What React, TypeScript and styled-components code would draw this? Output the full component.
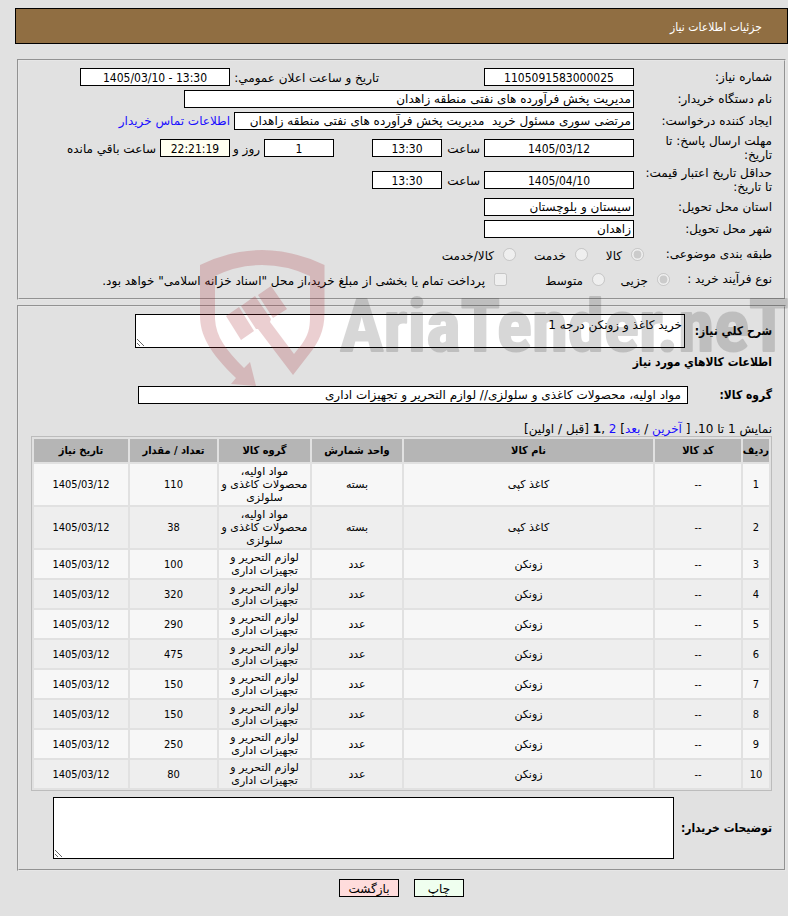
import React from "react";
import styled, { createGlobalStyle, css } from "styled-components";

const textFont = '"DejaVu Sans", Tahoma, sans-serif';
const compactFont = '"DejaVu Sans Condensed", "DejaVu Sans", Tahoma, sans-serif';

const GlobalStyle = createGlobalStyle`
  *, *::before, *::after { box-sizing: border-box; }
  body {
    margin: 0;
    background: #e1e1e1;
    color: #000;
    font: 12px/14px ${textFont};
  }
  a { color: #1a0dff; text-decoration: none; }
`;

const Page = styled.main`
  position: relative;
  padding: 8px 0 18px 15px;
  overflow: hidden;
`;

const TitleBar = styled.h1`
  display: flex;
  align-items: center;
  height: 36px;
  margin: 0 0 15px;
  padding: 2px 25px 0;
  border: 1px solid #000;
  background: #906e42;
  color: #fff;
  font: 12px/14px ${compactFont};
`;

const Panel = styled.fieldset`
  min-width: 0;
  margin: 0 2px 5px;
  padding: 7px 12px 10px;
  border: 2px groove #e6e6e6;
`;

const FormGrid = styled.div`
  display: flex;
  flex-direction: column;
  gap: 4px;
`;

const Row = styled.div<{ $height?: number }>`
  display: flex;
  align-items: center;
  gap: 4px;
  min-height: ${(p) => p.$height ?? 18}px;
`;

const RowLabel = styled.label<{ $width?: number }>`
  flex: none;
  width: ${(p) => p.$width ?? 134}px;
`;

const InlineLabel = styled.label<{ $width: number; $before?: number }>`
  flex: none;
  width: ${(p) => p.$width}px;
  margin-inline-start: ${(p) => p.$before ?? 0}px;
  padding-top: 1px;
  white-space: nowrap;
`;

const fieldLook = css`
  border: 1px solid #000;
  border-radius: 0;
  outline: 0;
  background: #fff;
  color: #000;
`;

const Field = styled.input<{ $width: number; $numeric?: boolean; $before?: number; $warm?: boolean; $inset?: number }>`
  ${fieldLook}
  flex: none;
  width: ${(p) => p.$width}px;
  height: 18px;
  margin: 0;
  margin-inline-start: ${(p) => p.$before ?? 0}px;
  padding: ${(p) => (p.$numeric ? 1 : 0)}px ${(p) => p.$inset ?? 2}px 0;
  font: 12px/14px ${(p) => (p.$numeric ? compactFont : textFont)};
  text-align: ${(p) => (p.$numeric ? "center" : "start")};
  ${(p) => p.$warm && "background: #fffff0;"}
`;

const ContactLink = styled.a`
  white-space: nowrap;
`;

const Choice = styled.input`
  flex: none;
  width: 13px;
  height: 13px;
  margin: 0;
`;

const ChoiceLabel = styled.label<{ $width?: number; $after?: number }>`
  flex: none;
  width: ${(p) => (p.$width ? `${p.$width}px` : "auto")};
  margin-inline-start: 5px;
  margin-inline-end: ${(p) => p.$after ?? 0}px;
  padding-top: 3px;
  white-space: nowrap;
`;

const BoldLabel = styled.label<{ $width: number }>`
  flex: none;
  width: ${(p) => p.$width}px;
  font: bold 12px/14px ${compactFont};
  white-space: nowrap;
`;

const Memo = styled.textarea<{ $width: number; $height: number }>`
  ${fieldLook}
  display: block;
  flex: none;
  width: ${(p) => p.$width}px;
  height: ${(p) => p.$height}px;
  margin: 0;
  padding: 3px 2px;
  font: 12px/14px ${textFont};
`;

const SectionHeading = styled.h2`
  margin: 6px 0 16px;
  font: bold 12px/16px ${compactFont};
`;

const Pager = styled.nav`
  margin-top: 18px;
`;

const Goods = styled.table`
  width: 100%;
  margin-bottom: 6px;
  table-layout: fixed;
  border: 1px solid #bcbcbc;
  border-collapse: separate;
  border-spacing: 2px;
  font-size: 11px;
  line-height: 13px;
  text-align: center;
`;

const Column = styled.col<{ $width?: number }>`
  width: ${(p) => (p.$width ? `${p.$width}px` : "auto")};
`;

const HeadCell = styled.th`
  height: 23px;
  padding: 0;
  background: #b5b5b5;
  font: bold 11px/13px ${compactFont};
  white-space: nowrap;
`;

const BodyRow = styled.tr`
  background: #f7f7f7;
  &:nth-child(even) { background: #eee; }
`;

const Cell = styled.td<{ $numeric?: boolean }>`
  padding: 1px;
  font-family: ${(p) => (p.$numeric ? compactFont : textFont)};
`;

const Actions = styled.div`
  display: flex;
  justify-content: center;
  gap: 15px;
  margin-top: 8px;
`;

const ActionButton = styled.button<{ $width: number; $tone: string }>`
  width: ${(p) => p.$width}px;
  height: 18px;
  padding: 1px 0 0;
  border: 1px solid #000;
  border-radius: 0;
  background: ${(p) => p.$tone};
  color: #000;
  font: 12px/14px ${textFont};
`;

const Watermark = styled.svg`
  position: absolute;
  top: 240px;
  left: 200px;
  width: 588px;
  height: 150px;
  pointer-events: none;
`;

const paper = ["مواد اولیه، محصولات کاغذی و سلولزی", "بسته", "کاغذ کپی"];
const office = ["لوازم التحریر و تجهیزات اداری", "عدد", "زونکن"];
const goods = [
  { kind: paper, count: 110 },
  { kind: paper, count: 38 },
  { kind: office, count: 100 },
  { kind: office, count: 320 },
  { kind: office, count: 290 },
  { kind: office, count: 475 },
  { kind: office, count: 150 },
  { kind: office, count: 150 },
  { kind: office, count: 250 },
  { kind: office, count: 80 },
];

const headings = ["ردیف", "کد کالا", "نام کالا", "واحد شمارش", "گروه کالا", "تعداد / مقدار", "تاریخ نیاز"];

function WatermarkLogo() {
  return (
    <Watermark viewBox="200 240 588 150" aria-hidden="true">
      <g fill="#a82932" opacity="0.22">
        <path d="M200 265Q231 250 262 250T324.500 265V313C324.500 331 318 343 310 353L293 375L258 329L256 329L241 306L255 296L271 319L270 322L294 354L302 344C308 335 310 329 310 317V276Q287 265 262 265T215 276V319C216 337 226 350 244 368L250 362L256 386L231 384L236 378C209 352 200 335 200 315Z" />
        <path d="M226 316L239 307L254 331L241 340ZM258 295L271 286L287 309L273 318Z" />
      </g>
      <g opacity="0.17">
        <text x="340" y="351" direction="ltr" fill="#181818" stroke="#181818" strokeWidth="2" strokeLinejoin="round" fontFamily="'Roboto Condensed', Roboto, sans-serif" fontWeight="700" fontSize="73">
          AriaTender.neT
        </text>
      </g>
    </Watermark>
  );
}

export default function App() {
  return (
    <Page dir="rtl" lang="fa">
      <GlobalStyle />
      <TitleBar>جزئیات اطلاعات نیاز</TitleBar>

      <Panel>
        <FormGrid>
          <Row>
            <RowLabel htmlFor="number">شماره نیاز:</RowLabel>
            <Field id="number" $width={150} $numeric readOnly value="1105091583000025" />
            <InlineLabel htmlFor="announced" $width={145} $before={101}>تاریخ و ساعت اعلان عمومي:</InlineLabel>
            <Field id="announced" $width={150} $numeric dir="ltr" readOnly value="1405/03/10 - 13:30" />
          </Row>
          <Row>
            <RowLabel htmlFor="buyer">نام دستگاه خریدار:</RowLabel>
            <Field id="buyer" $width={450} readOnly value="مدیریت پخش فرآورده های نفتی منطقه زاهدان" />
          </Row>
          <Row>
            <RowLabel htmlFor="creator">ایجاد کننده درخواست:</RowLabel>
            <Field id="creator" $width={400} readOnly value="مرتضی سوری مسئول خرید  مدیریت پخش فرآورده های نفتی منطقه زاهدان" />
            <ContactLink href="#contact">اطلاعات تماس خریدار</ContactLink>
          </Row>
          <Row $height={28}>
            <RowLabel htmlFor="replyDate">مهلت ارسال پاسخ: تا تاریخ:</RowLabel>
            <Field id="replyDate" $width={150} $numeric readOnly value="1405/03/12" />
            <InlineLabel htmlFor="replyTime" $width={34}>ساعت</InlineLabel>
            <Field id="replyTime" $width={70} $numeric readOnly value="13:30" />
            <Field id="days" $width={70} $numeric $before={34} readOnly value="1" />
            <InlineLabel htmlFor="days" $width={26}>روز و</InlineLabel>
            <Field id="remaining" $width={70} $numeric $warm readOnly value="22:21:19" />
            <InlineLabel htmlFor="remaining" $width={90}>ساعت باقي مانده</InlineLabel>
          </Row>
          <Row $height={28}>
            <RowLabel htmlFor="validDate">حداقل تاریخ اعتبار قیمت: تا تاریخ:</RowLabel>
            <Field id="validDate" $width={150} $numeric readOnly value="1405/04/10" />
            <InlineLabel htmlFor="validTime" $width={34}>ساعت</InlineLabel>
            <Field id="validTime" $width={70} $numeric readOnly value="13:30" />
          </Row>
          <Row>
            <RowLabel htmlFor="province">استان محل تحویل:</RowLabel>
            <Field id="province" $width={150} readOnly value="سیستان و بلوچستان" />
          </Row>
          <Row>
            <RowLabel htmlFor="city">شهر محل تحویل:</RowLabel>
            <Field id="city" $width={150} readOnly value="زاهدان" />
          </Row>
          <Row $height={24} role="radiogroup" aria-labelledby="subject">
            <RowLabel as="span" id="subject" $width={124}>طبقه بندی موضوعی:</RowLabel>
            <Choice type="radio" id="goods" name="subject" disabled defaultChecked />
            <ChoiceLabel htmlFor="goods" $width={16} $after={14}>کالا</ChoiceLabel>
            <Choice type="radio" id="service" name="subject" disabled />
            <ChoiceLabel htmlFor="service" $width={32} $after={14}>خدمت</ChoiceLabel>
            <Choice type="radio" id="both" name="subject" disabled />
            <ChoiceLabel htmlFor="both">کالا/خدمت</ChoiceLabel>
          </Row>
          <Row role="radiogroup" aria-labelledby="process">
            <RowLabel as="span" id="process" $width={98}>نوع فرآیند خرید :</RowLabel>
            <Choice type="radio" id="minor" name="process" disabled defaultChecked />
            <ChoiceLabel htmlFor="minor" $width={28} $after={11}>جزیی</ChoiceLabel>
            <Choice type="radio" id="medium" name="process" disabled />
            <ChoiceLabel htmlFor="medium" $width={36} $after={36}>متوسط</ChoiceLabel>
            <Choice type="checkbox" id="bonds" disabled />
            <ChoiceLabel htmlFor="bonds">پرداخت تمام یا بخشی از مبلغ خرید،از محل "اسناد خزانه اسلامی" خواهد بود.</ChoiceLabel>
          </Row>
        </FormGrid>
      </Panel>

      <Panel>
        <Row>
          <BoldLabel htmlFor="summary" $width={83}>شرح کلي نیاز:</BoldLabel>
          <Memo id="summary" $width={550} $height={34} readOnly value="خرید کاغذ و زونکن درجه 1" />
        </Row>
        <SectionHeading>اطلاعات کالاهاي مورد نیاز</SectionHeading>
        <Row>
          <BoldLabel htmlFor="group" $width={80}>گروه کالا:</BoldLabel>
          <Field id="group" $width={550} $inset={6} readOnly value="مواد اولیه، محصولات کاغذی و سلولزی// لوازم التحریر و تجهیزات اداری" />
        </Row>
        <Pager>
          نمایش 1 تا 10. [ <a href="#last">آخرین</a> / <a href="#next">بعد</a>] <a href="#2">2</a> ,<strong>1</strong> [قبل / اولین]
        </Pager>
        <Goods>
          <colgroup>
            <Column $width={26} />
            <Column $width={86} />
            <Column />
            <Column $width={90} />
            <Column $width={91} />
            <Column $width={87} />
            <Column $width={94} />
          </colgroup>
          <thead>
            <tr>
              {headings.map((h) => (
                <HeadCell key={h} scope="col">{h}</HeadCell>
              ))}
            </tr>
          </thead>
          <tbody>
            {goods.map(({ kind: [group, unit, name], count }, i) => (
              <BodyRow key={i}>
                <Cell $numeric>{i + 1}</Cell>
                <Cell $numeric>--</Cell>
                <Cell>{name}</Cell>
                <Cell>{unit}</Cell>
                <Cell>{group}</Cell>
                <Cell $numeric>{count}</Cell>
                <Cell $numeric>1405/03/12</Cell>
              </BodyRow>
            ))}
          </tbody>
        </Goods>
        <Row>
          <BoldLabel htmlFor="notes" $width={94}>توضیحات خریدار:</BoldLabel>
          <Memo id="notes" $width={621} $height={62} readOnly value="" />
        </Row>
      </Panel>

      <Actions>
        <ActionButton type="button" $width={50} $tone="#efffef">چاپ</ActionButton>
        <ActionButton type="button" $width={60} $tone="#ffdcdc">بازگشت</ActionButton>
      </Actions>
      <WatermarkLogo />
    </Page>
  );
}
